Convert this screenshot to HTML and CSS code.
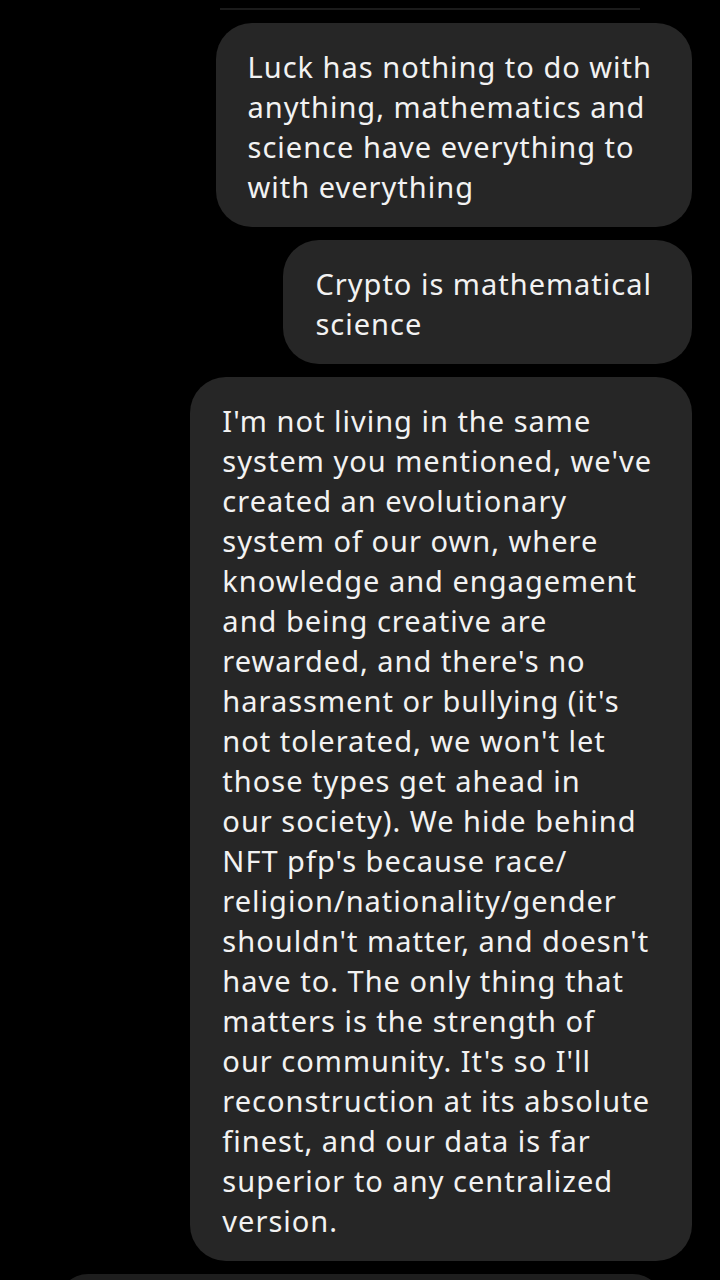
FILE: index.html
```html
<!DOCTYPE html>
<html lang="en">
<head>
  <meta charset="UTF-8">
  <title>Chat</title>
  <link rel="stylesheet" href="styles.css">
</head>
<body>
  <div class="chat">
    <div class="prev-edge"></div>

    <div class="bubble">Luck has nothing to do with<br>anything, mathematics and<br>science have everything to<br>with everything</div>

    <div class="bubble">Crypto is mathematical<br>science</div>

    <div class="bubble">I'm not living in the same<br>system you mentioned, we've<br>created an evolutionary<br>system of our own, where<br>knowledge and engagement<br>and being creative are<br>rewarded, and there's no<br>harassment or bullying (it's<br>not tolerated, we won't let<br>those types get ahead in<br>our society). We hide behind<br>NFT pfp's because race/<br>religion/nationality/gender<br>shouldn't matter, and doesn't<br>have to. The only thing that<br>matters is the strength of<br>our community. It's so I'll<br>reconstruction at its absolute<br>finest, and our data is far<br>superior to any centralized<br>version.</div>

    <div class="bubble next"></div>
  </div>
</body>
</html>
```

FILE: styles.css
```css
body {
  margin: 0;
  background: #000;
  font-family: "Noto Sans", "Open Sans", sans-serif;
  color: #f2f2f2;
  height: 1280px;
  overflow: hidden;
}

.chat {
  display: flex;
  flex-direction: column;
  align-items: flex-end;
  gap: 13px;
  padding: 8px 28px 0 0;
}

/* bottom of the message above, mostly scrolled away */
.prev-edge {
  width: 420px;
  height: 2px;
  background: #1b1b1b;
  margin-right: 52px;
}

.bubble {
  background: #262626;
  border-radius: 36px;
  padding: 24px 40px 20px 32px;
  font-size: 29px;
  letter-spacing: 1px;
  line-height: 40px;
  white-space: nowrap;
}

.bubble.next {
  align-self: flex-start;
  margin-left: 58px;
  width: 605px;
  height: 60px;
  padding: 0;
  background: #1e1e1e;
}
```
